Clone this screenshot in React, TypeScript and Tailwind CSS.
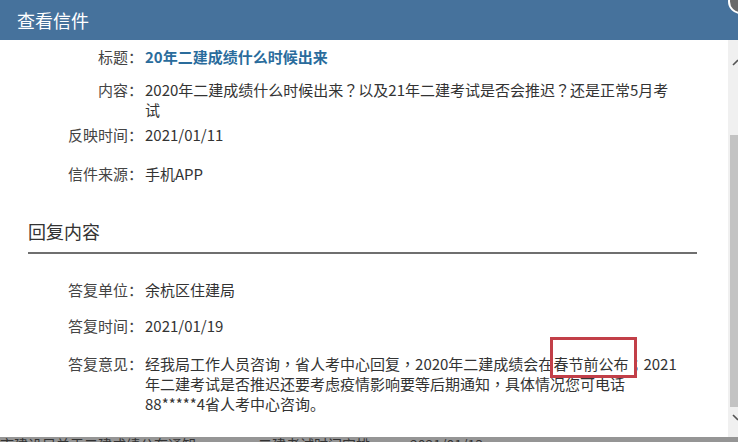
import React from "react";

// full-width punctuation sits centred in the reference, as TC glyphs do
function P({ c }: { c: string }) {
  return <span className="font-['Noto_Sans_CJK_TC',sans-serif]">{c}</span>;
}

function Row({
  label,
  children,
  className = "",
}: {
  label: string;
  children: React.ReactNode;
  className?: string;
}) {
  return (
    <div className={`flex text-[15px] leading-[20px] ${className}`}>
      <div className="w-[117px] shrink-0 pr-[2px] text-right text-[#444]">{label}</div>
      <div className="whitespace-nowrap text-[#333]">{children}</div>
    </div>
  );
}

export default function App() {
  return (
    <div className="relative flex h-[442px] w-[738px] flex-col overflow-hidden bg-white font-['Noto_Sans_CJK_SC','Noto_Sans',sans-serif]">
      {/* header */}
      <div className="flex h-[40px] shrink-0 items-center bg-[#46729c] px-[17px] text-[18px] text-white">
        查看信件
      </div>
      <div className="absolute right-[-15px] top-[-11px] h-[25px] w-[25px] rounded-full border-2 border-white bg-[#6a6a6a]" />

      <div className="flex min-h-0 flex-1">
        {/* content */}
        <div className="flex-1 pl-[28px] pr-[31px] pt-[7px]">
          <Row label="标题：">
            <span className="font-bold text-[#2a6c9c]">20年二建成绩什么时候出来</span>
          </Row>
          <Row label="内容：" className="mt-[13px]">
            2020年二建成绩什么时候出来<P c="？" />以及21年二建考试是否会推迟<P c="？" />还是正常5月考
            <br />试
          </Row>
          <Row label="反映时间：" className="mt-[5px]">
            2021/01/11
          </Row>
          <Row label="信件来源：" className="mt-[19px]">
            手机APP
          </Row>

          <div className="mt-[35px] border-b-2 border-[#6f6f6f] pb-[9px] text-[18px] leading-[24px] text-[#333]">
            回复内容
          </div>

          <Row label="答复单位：" className="mt-[26px]">
            余杭区住建局
          </Row>
          <Row label="答复时间：" className="mt-[16px]">
            2021/01/19
          </Row>
          <Row label="答复意见：" className="mt-[18px]">
            经我局工作人员咨询<P c="，" />省人考中心回复<P c="，" />2020年二建成绩会在
            <span className="relative">
              春节前公布
              <span className="absolute bottom-[-4px] left-[-3px] right-[-9px] top-[-16px] border-[3px] border-[#c23f48]" />
            </span>
            <P c="；" />2021
            <br />
            年二建考试是否推迟还要考虑疫情影响要等后期通知<P c="，" />具体情况您可电话
            <br />
            88*****4省人考中心咨询。
          </Row>
        </div>

        {/* scrollbar */}
        <div className="flex w-[10px] shrink-0 flex-col overflow-hidden bg-[#f0f0f0]">
          <svg width="10" height="10" viewBox="0 0 10 10" className="mt-[16px]">
            <path d="M5 9 L10 4" stroke="#555" strokeWidth="1.6" fill="none" />
          </svg>
          <div className="ml-[2px] mt-[69px] h-[272px] bg-[#c3c3c3]" />
          <svg width="10" height="10" viewBox="0 0 10 10" className="mt-[5px]">
            <path d="M5 3 L10 8" stroke="#555" strokeWidth="1.6" fill="none" />
          </svg>
        </div>
      </div>

      {/* edge of the list page behind the dialog */}
      <div className="flex h-[5px] shrink-0 overflow-hidden bg-[#959595] text-[14px] leading-[14px] text-[#333]">
        <span className="w-[258px] whitespace-nowrap">市建设局关于二建成绩公布通知</span>
        <span className="w-[152px] whitespace-nowrap">二建考试时间安排</span>
        <span className="whitespace-nowrap">2021/01/13</span>
      </div>
    </div>
  );
}
